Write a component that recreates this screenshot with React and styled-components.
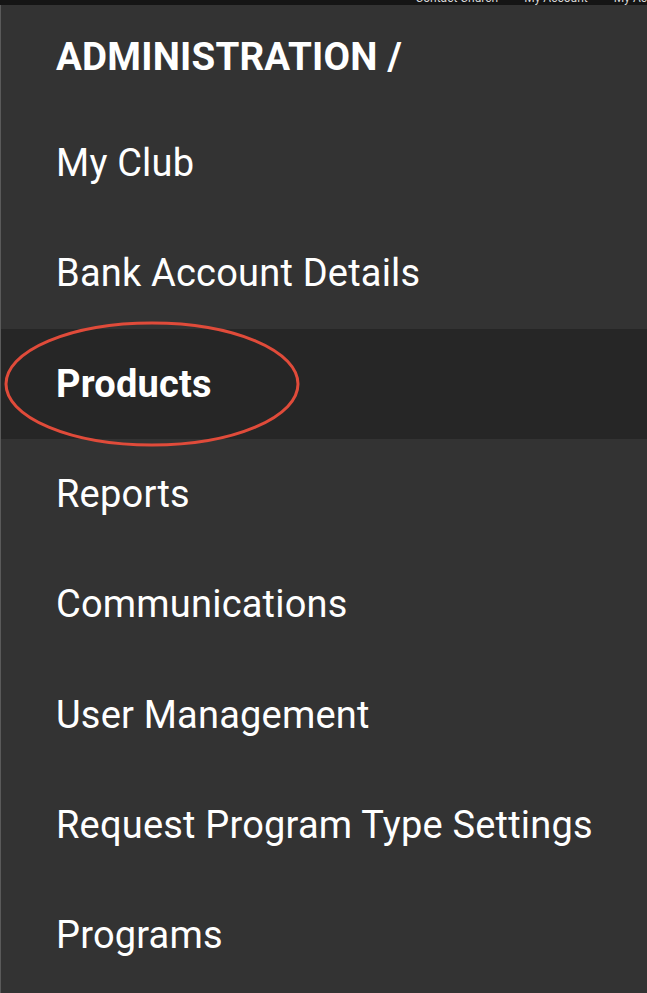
import React from "react";
import styled, { createGlobalStyle } from "styled-components";

const GlobalStyle = createGlobalStyle`
  html, body {
    margin: 0;
    padding: 0;
    background: #333333;
  }
  body {
    font-family: Roboto, "Noto Sans", Arial, sans-serif;
    -webkit-font-smoothing: antialiased;
  }
`;

const Page = styled.div`
  width: 647px;
  height: 993px;
  overflow: hidden;
  background: #333333;
  display: flex;
  flex-direction: column;
`;

const TopStrip = styled.div`
  height: 5px;
  background: #151515;
  overflow: hidden;
  display: flex;
  justify-content: flex-end;
  gap: 26px;
  flex-shrink: 0;
`;

const TopLink = styled.span`
  color: #d8d8d8;
  font-size: 12px;
  line-height: 12px;
  margin-top: -8px;
  white-space: nowrap;
`;

const Drawer = styled.nav`
  flex: 1;
  border-left: 1px solid #5a5a5a;
  display: flex;
  flex-direction: column;
`;

const Heading = styled.h2`
  margin: 0;
  height: 103px;
  display: flex;
  align-items: center;
  padding-left: 55px;
  color: #ffffff;
  font-size: 38.5px;
  font-weight: 700;
  letter-spacing: 0.2px;
`;

const MenuList = styled.ul`
  list-style: none;
  margin: 0;
  padding: 0;
`;

const MenuItem = styled.li`
  position: relative;
  height: 110.3px;
  display: flex;
  align-items: center;
  padding-left: 55px;
  color: #ffffff;
  font-size: 38px;
  letter-spacing: 0.2px;
  font-weight: ${(p) => (p.$active ? 700 : 400)};
  background: ${(p) => (p.$active ? "#262626" : "transparent")};
`;

const Circle = styled.svg`
  position: absolute;
  left: 3px;
  top: -7px;
  overflow: visible;
  pointer-events: none;
`;

const items = [
  "My Club",
  "Bank Account Details",
  "Products",
  "Reports",
  "Communications",
  "User Management",
  "Request Program Type Settings",
  "Programs",
];

export default function App() {
  return (
    <Page>
      <GlobalStyle />
      <TopStrip>
        <TopLink>Contact Church</TopLink>
        <TopLink>My Account</TopLink>
        <TopLink>My Ac</TopLink>
      </TopStrip>
      <Drawer>
        <Heading>ADMINISTRATION /</Heading>
        <MenuList>
          {items.map((label) => (
            <MenuItem key={label} $active={label === "Products"}>
              {label}
              {label === "Products" && (
                <Circle width="296" height="124" viewBox="0 0 296 124">
                  <ellipse
                    cx="148"
                    cy="62"
                    rx="146"
                    ry="61"
                    fill="none"
                    stroke="#e04b3a"
                    strokeWidth="3"
                  />
                </Circle>
              )}
            </MenuItem>
          ))}
        </MenuList>
      </Drawer>
    </Page>
  );
}
